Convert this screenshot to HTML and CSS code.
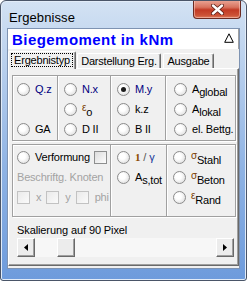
FILE: index.html
```html
<!DOCTYPE html>
<html lang="de">
<head>
    <meta charset="UTF-8">
    <title>Ergebnisse</title>
    <link rel="stylesheet" href="styles.css">
</head>
<body>
    <div class="window">
        <div class="titlebar">
            <span class="title">Ergebnisse</span>
            <div class="close">
                <svg width="13" height="11" viewBox="0 0 13 11">
                    <path d="M2 1.5 L11 9.5 M11 1.5 L2 9.5" stroke="#5a1d14" stroke-width="4" stroke-linecap="round"/>
                    <path d="M2 1.5 L11 9.5 M11 1.5 L2 9.5" stroke="#fff" stroke-width="2.4" stroke-linecap="round"/>
                </svg>
            </div>
        </div>

        <div class="client">
            <div class="header">
                <span>Biegemoment in kNm</span>
                <svg class="collapse" width="10" height="10" viewBox="0 0 10 10">
                    <path d="M5 0.8 L9.3 9.3 L0.7 9.3 Z" fill="none" stroke="#000" stroke-width="1"/>
                </svg>
            </div>

            <div class="tabs">
                <div class="tab active t1"><span class="focus">Ergebnistyp</span></div>
                <div class="tab t2">Darstellung Erg.</div>
                <div class="tab t3">Ausgabe</div>
            </div>

            <div class="panel">
                <div class="group g1">
                    <div class="col c1">
                        <div class="opt"><i class="radio"></i><span class="blue">Q.z</span></div>
                        <div class="opt"></div>
                        <div class="opt"><i class="radio"></i>GA</div>
                    </div>
                    <div class="col c2">
                        <div class="opt"><i class="radio"></i><span class="blue">N.x</span></div>
                        <div class="opt"><i class="radio"></i><span class="sym">ε</span><span class="sub">o</span></div>
                        <div class="opt"><i class="radio"></i>D II</div>
                    </div>
                    <div class="col c3">
                        <div class="opt"><i class="radio checked"></i><span class="blue">M.y</span></div>
                        <div class="opt"><i class="radio"></i>k.z</div>
                        <div class="opt"><i class="radio"></i>B II</div>
                    </div>
                    <div class="col c4">
                        <div class="opt"><i class="radio"></i>A<span class="sub">global</span></div>
                        <div class="opt"><i class="radio"></i>A<span class="sub">lokal</span></div>
                        <div class="opt"><i class="radio"></i>el. Bettg.</div>
                    </div>
                </div>

                <div class="group g2">
                    <div class="col d1">
                        <div class="opt"><i class="radio"></i>Verformung<i class="check"></i></div>
                        <div class="opt disabled">Beschriftg. Knoten</div>
                        <div class="opt disabled">
                            <i class="check off"></i><span class="cb-label">x</span>
                            <i class="check off"></i><span class="cb-label">y</span>
                            <i class="check off"></i><span class="cb-label">phi</span>
                        </div>
                    </div>
                    <div class="col d2">
                        <div class="opt"><i class="radio"></i><span class="one">1</span><span class="slash">/</span><span class="gamma">γ</span></div>
                        <div class="opt"><i class="radio"></i>A<span class="sub">s,tot</span></div>
                        <div class="opt"></div>
                    </div>
                    <div class="col d3">
                        <div class="opt"><i class="radio"></i><span class="sym">σ</span><span class="sub">Stahl</span></div>
                        <div class="opt"><i class="radio"></i><span class="sym">σ</span><span class="sub">Beton</span></div>
                        <div class="opt"><i class="radio"></i><span class="sym">ε</span><span class="sub">Rand</span></div>
                    </div>
                </div>

                <div class="caption">Skalierung auf 90 Pixel</div>

                <div class="scrollbar">
                    <div class="sbtn">
                        <svg width="4" height="7" viewBox="0 0 4 7"><path d="M4 0 L0 3.5 L4 7 Z" fill="#000"/></svg>
                    </div>
                    <div class="track">
                        <div class="thumb"></div>
                    </div>
                    <div class="sbtn">
                        <svg width="4" height="7" viewBox="0 0 4 7"><path d="M0 0 L4 3.5 L0 7 Z" fill="#000"/></svg>
                    </div>
                </div>
            </div>
        </div>
    </div>
</body>
</html>
```

FILE: styles.css
```css
body {
    margin: 0;
    background-color: #fff;
    font-family: "Liberation Sans", Arial, sans-serif;
    font-size: 11px;
    color: #000;
}

.window {
    width: 247px;
    height: 281px;
    box-sizing: border-box;
    border: 1px solid #4a5568;
    border-radius: 6px 6px 3px 3px;
    background: linear-gradient(#d3e2f3, #bcd2ee 20%, #8fb3e4 60%, #6d9bdc);
    box-shadow: inset 0 0 0 1px #e2ecf8;
    overflow: hidden;
}

.titlebar {
    height: 27px;
    display: flex;
    align-items: flex-start;
    justify-content: space-between;
}

.title {
    font-size: 13px;
    margin: 9px 0 0 8px;
    letter-spacing: 0.1px;
}

.close {
    width: 46px;
    height: 18px;
    margin: -1px 5px 0 0;
    border: 1px solid #6b2b22;
    border-top: none;
    border-radius: 0 0 4px 4px;
    background: linear-gradient(#eba898, #d8735f 40%, #c23a24 55%, #cc5236 85%, #dd7d5e);
    box-shadow: inset 0 0 0 1px rgba(255, 215, 205, 0.5);
    display: flex;
    align-items: center;
    justify-content: center;
}

.client {
    margin: 0 6px;
    height: 241px;
    box-sizing: border-box;
    border: 1px solid #7e93b2;
    background-color: #f0f0f0;
}

.header {
    height: 20px;
    background-color: #fff;
    border-right: 1px solid #a0a0a0;
    display: flex;
    align-items: center;
    justify-content: space-between;
    padding: 0 4px 0 4px;
    font-size: 15px;
    font-weight: bold;
    color: #0000ff;
    letter-spacing: 0.45px;
}

.collapse {
    margin-top: -2px;
}

.tabs {
    display: flex;
    height: 17px;
    margin-top: 2px;
    align-items: flex-end;
    position: relative;
    z-index: 1;
}

.tab {
    height: 15px;
    box-sizing: border-box;
    padding-top: 1px;
    border-left: 1px solid #fff;
    border-top: 1px solid #fff;
    border-right: 1px solid #696969;
    box-shadow: inset -1px 0 0 #a0a0a0;
    border-radius: 2px 2px 0 0;
    margin-left: 1px;
    white-space: nowrap;
    line-height: 13px;
    text-align: center;
    letter-spacing: -0.2px;
}

.t1 { width: 68px; }
.t2 { width: 84px; margin-left: 1px; }
.t3 { width: 51px; margin-left: 2px; }

.tab.active {
    height: 18px;
    margin-left: 0;
    margin-bottom: -1px;
    padding-top: 2px;
    background-color: #f0f0f0;
}

.focus {
    display: inline-block;
    outline: 1px dotted #000;
    padding: 0 2px;
    line-height: 12px;
}

.panel {
    height: 198px;
    box-sizing: border-box;
    border-top: 1px solid #fff;
    border-left: 1px solid #fff;
    border-right: 1px solid #696969;
    border-bottom: 1px solid #696969;
    box-shadow: inset -1px -1px 0 #a0a0a0;
    padding: 6px 2px 0 3px;
}

.group {
    display: flex;
    border: 1px solid #a0a0a0;
    box-shadow: inset 1px 1px 0 #fff, 1px 1px 0 #fff;
}

.g1 {
    height: 66px;
    padding-top: 3px;
    box-sizing: border-box;
}

.g2 {
    margin-top: 3px;
    height: 73px;
    padding-top: 2px;
    box-sizing: border-box;
}

.col {
    display: flex;
    flex-direction: column;
}

.col + .col {
    border-left: 1px solid #a0a0a0;
    box-shadow: inset 1px 0 0 #fff;
    margin-top: -3px;
    padding-top: 3px;
}

.c1 { width: 40px; padding-left: 4px; }
.c2 { width: 46px; padding-left: 6px; }
.c3 { width: 48px; padding-left: 6px; }
.c4 { flex: 1; padding-left: 8px; }

.d1 { width: 93px; padding-left: 4px; }
.d2 { width: 49px; padding-left: 6px; }
.d3 { flex: 1; padding-left: 6px; }

.g2 .col + .col {
    margin-top: -2px;
    padding-top: 2px;
}

.opt {
    height: 20px;
    display: flex;
    align-items: center;
    white-space: nowrap;
    letter-spacing: -0.2px;
}

.radio {
    width: 13px;
    height: 13px;
    box-sizing: border-box;
    border-radius: 50%;
    border: 1px solid #8c8c8c;
    background: radial-gradient(circle at 40% 40%, #ffffff 30%, #e0e0e0 80%);
    margin-right: 5px;
    flex-shrink: 0;
    display: flex;
    align-items: center;
    justify-content: center;
}

.radio.checked::after {
    content: "";
    width: 5px;
    height: 5px;
    border-radius: 50%;
    background-color: #1c1c1c;
}

.check {
    width: 13px;
    height: 13px;
    box-sizing: border-box;
    border: 1px solid #8e8f8f;
    background: linear-gradient(135deg, #dcdcdc, #fdfdfd);
    margin-left: 4px;
    flex-shrink: 0;
}

.check.off {
    border-color: #c2c2c2;
    background: linear-gradient(135deg, #eaeaea, #fafafa);
    margin: 0 6px 0 0;
}

.cb-label {
    margin-right: 5px;
}

.disabled {
    color: #a3a3a3;
}

.blue {
    color: #000080;
}

.sym {
    color: #7a3c00;
    font-size: 10px;
    align-self: flex-start;
    margin-top: 3px;
}

.sub {
    position: relative;
    top: 3px;
}

.one {
    color: #8a4a00;
    font-weight: bold;
    font-family: "Liberation Serif", serif;
}

.slash {
    color: #555;
    margin: 0 3px;
}

.gamma {
    color: #1a3a9a;
}

.caption {
    margin: 6px 0 0 5px;
    height: 14px;
    line-height: 14px;
    letter-spacing: -0.1px;
}

.scrollbar {
    display: flex;
    height: 19px;
    margin: 1px 2px 0 5px;
    background-color: #f4f4f4;
}

.sbtn {
    width: 18px;
    box-sizing: border-box;
    border-top: 1px solid #fff;
    border-left: 1px solid #fff;
    border-right: 1px solid #696969;
    border-bottom: 1px solid #696969;
    box-shadow: inset -1px -1px 0 #a0a0a0;
    background-color: #ececec;
    display: flex;
    align-items: center;
    justify-content: center;
}

.track {
    flex: 1;
    background-color: #f7f7f7;
    padding-left: 22px;
}

.thumb {
    width: 18px;
    height: 100%;
    box-sizing: border-box;
    border-top: 1px solid #fff;
    border-left: 1px solid #fff;
    border-right: 1px solid #696969;
    border-bottom: 1px solid #696969;
    box-shadow: inset -1px -1px 0 #a0a0a0;
    background-color: #ececec;
}
```
